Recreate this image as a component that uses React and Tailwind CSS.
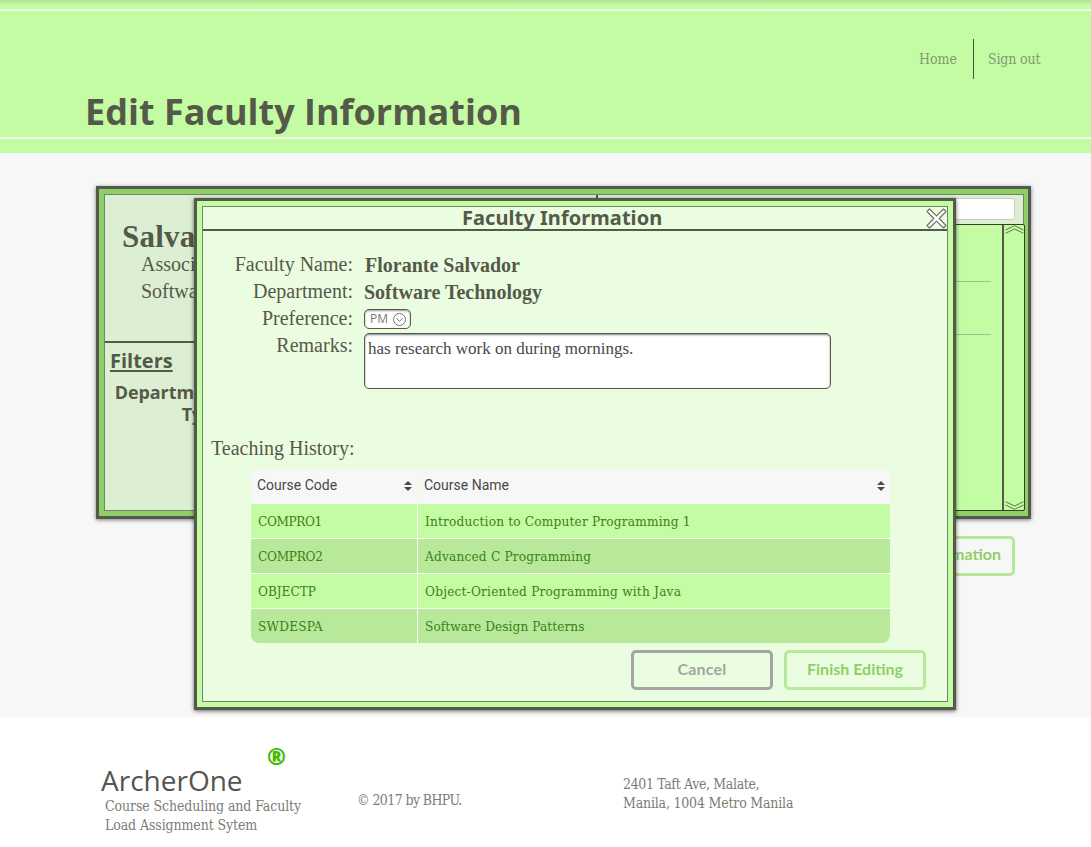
const slab = "font-['DejaVu_Serif_Condensed','DejaVu_Serif',serif] [font-stretch:condensed]";
const times = "font-['Liberation_Serif',serif]";
const sans = "font-['Open_Sans',sans-serif] [font-stretch:normal]";

const courses = [
  { code: "COMPRO1", name: "Introduction to Computer Programming 1", row: "bg-[#c4fca4]", codeFit: "tracking-[-0.4px]", nameFit: "tracking-[0.19px]" },
  { code: "COMPRO2", name: "Advanced C Programming", row: "bg-[#b8e89a]", codeFit: "tracking-[-0.3px]", nameFit: "tracking-[0.2px]" },
  { code: "OBJECTP", name: "Object-Oriented Programming with Java", row: "bg-[#c4fca4]", codeFit: "tracking-[-0.05px]", nameFit: "tracking-[0.21px]" },
  { code: "SWDESPA", name: "Software Design Patterns", row: "bg-[#b8e89a]", codeFit: "tracking-[0.2px]", nameFit: "tracking-[0.08px]" },
];

function SortIcon() {
  return (
    <svg width="8" height="10" viewBox="0 0 8 10" className="mb-0.5 shrink-0" fill="#484848">
      <path d="M4 0 8 4H0Z M4 10 8 6H0Z" />
    </svg>
  );
}

function CloseIcon() {
  return (
    <svg width="21" height="21" viewBox="0 0 21 21" fill="#fff" stroke="#6a7064" strokeWidth="1.1" strokeLinejoin="round">
      <path d="M3.5 1 10.5 7.8 17.5 1 20 3.5 13.2 10.5 20 17.5 17.5 20 10.5 13.2 3.5 20 1 17.5 7.8 10.5 1 3.5Z" />
    </svg>
  );
}

function Chevrons({ className }) {
  return (
    <svg width="19" height="9" viewBox="0 0 19 9" className={className} fill="none" stroke="#5a7a48" strokeWidth="1">
      <path d="M.5 5 9.5 .7 18.5 5 M.5 8.3 9.5 4 18.5 8.3" />
    </svg>
  );
}

function Header() {
  return (
    <header className="flex h-[153px] flex-col bg-[#c4fca4] bg-[linear-gradient(to_bottom,#b0e392,#c4fca4_5px)]">
      <div className="mt-[9px] flex h-[130px] flex-col border-y-2 border-[#f0fde8]">
        <nav className={`mr-[50px] mt-7 flex h-10 shrink-0 items-center self-end text-[14px] text-[#7f9a70] ${slab}`}>
          <a className="w-[54px] tracking-[0px]">Home</a>
          <span className="h-full w-px bg-[#44562f]" />
          <a className="ml-[14px] w-[53px] whitespace-nowrap tracking-[-0.15px]">Sign out</a>
        </nav>
        <h1 className={`ml-[85px] mt-[6px] shrink-0 whitespace-nowrap text-[36px] font-bold leading-[54px] text-[#55594a] ${sans}`}>
          Edit Faculty Information
        </h1>
      </div>
    </header>
  );
}

function FacultyPanel() {
  return (
    <section className="ml-24 mt-[33px] h-[333px] w-[935px] border-[3px] border-[#55594a] bg-[#8fcf68] p-[5px] shadow-[0_1px_4px_rgba(0,0,0,0.5)]">
      <div className="flex h-[317px] w-[920px] border border-[#71856a] bg-[#dcefd2]">
        <aside className="w-[493px] shrink-0 border-r-2 border-[#55594a] text-[#55594a]">
          <div className="h-[148px] border-b-2 border-[#55594a] pt-[24px]">
            <p className={`ml-[17px] text-[31px] font-bold leading-[36px] tracking-[0.2px] ${times}`}>Salvador</p>
            <p className={`ml-9 mt-[-4px] text-[20px] leading-[27px] ${times}`}>Associate</p>
            <p className={`ml-9 text-[20px] leading-[27px] ${times}`}>Software</p>
          </div>
          <h2 className={`ml-[5px] mt-[3px] text-[20px] font-bold leading-[30px] underline decoration-2 underline-offset-2 ${sans}`}>Filters</h2>
          <div className={`mt-[5px] w-[124px] text-right text-[18px] font-bold leading-[22px] tracking-[-0.1px] ${sans}`}>
            <p>Department:</p>
            <p>Type:</p>
          </div>
        </aside>
        <div className="flex grow flex-col">
          <div className="mr-2 mt-[3px] h-[22px] w-[300px] shrink-0 self-end rounded-[3px] border border-[#c8cdc4] bg-white" />
          <div className="mr-[-2px] mt-1 flex h-[287px] shrink-0 rounded-r-[2px] border border-[#33431f] bg-[#c4fca4]">
            <div className="grow pr-[11px]">
              <div className="h-[57px] border-b border-[#9fbf8c]" />
              <div className="h-[53px] border-b border-[#9fbf8c]" />
            </div>
            <div className="flex w-[22px] flex-col items-center justify-between border-l-2 border-[#55594a]">
              <Chevrons />
              <Chevrons className="rotate-180" />
            </div>
          </div>
        </div>
      </div>
    </section>
  );
}

function Field({ label, children }) {
  return (
    <div className="flex h-[27px]">
      <span className={`w-[150px] shrink-0 whitespace-nowrap text-right text-[20px] leading-[27px] text-[#55594a] ${times}`}>{label}</span>
      {children}
    </div>
  );
}

function CourseTable() {
  return (
    <div className="ml-12 mt-[8px] flex w-[639px] flex-col gap-px overflow-hidden rounded-b-lg bg-[#f4fdee]">
      <div className="flex h-[33px] gap-px bg-[#ebfde1] font-['Roboto',sans-serif] text-[14px] leading-[31px] text-[#484848]">
        <div className="flex w-[166px] items-center justify-between bg-[#f7f7f7] pl-1.5 pr-[5px]"><span className="h-[33px]">Course Code</span><SortIcon /></div>
        <div className="flex grow items-center justify-between bg-[#f7f7f7] pl-1.5 pr-[5px]"><span className="h-[33px]">Course Name</span><SortIcon /></div>
      </div>
      {courses.map((c) => (
        <div key={c.code} className={`flex h-[34px] gap-px whitespace-nowrap text-[13.5px] leading-[34px] text-[#3a8215] ${slab}`}>
          <div className={`w-[166px] pl-[7px] ${c.row} ${c.codeFit}`}>{c.code}</div>
          <div className={`grow pl-[7px] ${c.row} ${c.nameFit}`}>{c.name}</div>
        </div>
      ))}
    </div>
  );
}

function FacultyDialog() {
  return (
    <div role="dialog" className="absolute left-[194px] top-[198px] h-[512px] w-[762px] border-[3px] border-[#55594a] bg-[#c4fca4] p-[5px] shadow-[0_1px_4px_rgba(0,0,0,0.6)]">
      <div className="flex h-full flex-col border border-[#71856a] bg-[#ebfde1]">
        <div className="flex h-[24px] shrink-0 items-center border-b-2 border-[#55594a]">
          <h2 className="grow whitespace-nowrap pl-[259px] font-['Noto_Sans',sans-serif] text-[20px] font-bold leading-[22px] tracking-[0.06px] text-[#55594a]">Faculty Information</h2>
          <button aria-label="Close"><CloseIcon /></button>
        </div>
        <div className="mt-[20px] flex h-[157px] shrink-0 flex-col">
          <Field label="Faculty Name:">
            <b className={`ml-3 whitespace-nowrap text-[20px] leading-[29px] text-[#55594a] ${times}`}>Florante Salvador</b>
          </Field>
          <Field label="Department:">
            <b className={`ml-[11px] whitespace-nowrap text-[20px] leading-[29px] text-[#55594a] ${times}`}>Software Technology</b>
          </Field>
          <Field label="Preference:">
            <button className={`ml-[11px] mt-1 flex h-5 w-[47px] items-center justify-between rounded-[5px] border border-[#55594a] bg-white pl-[5px] pr-1 text-[12px] text-[#777] shadow-[inset_0_1px_2px_rgba(0,0,0,0.4)] ${sans}`}>
              PM
              <svg width="13" height="13" viewBox="0 0 13 13" fill="none" stroke="#666" strokeWidth="0.9"><circle cx="6.5" cy="6.5" r="6" /><path d="M3.3 5.2 6.5 8.2 9.7 5.2" /></svg>
            </button>
          </Field>
          <Field label="Remarks:">
            <div className={`ml-[11px] mt-[1px] h-14 w-[467px] shrink-0 rounded-[5px] border border-[#55594a] bg-white pl-[3px] pt-[5px] text-[17px] leading-5 text-[#484848] shadow-[inset_0_1px_2px_rgba(0,0,0,0.5)] ${times}`}>
              has research work on during mornings.
            </div>
          </Field>
        </div>
        <p className={`ml-2 mt-[27px] text-[20px] leading-[27px] text-[#55594a] ${times}`}>Teaching History:</p>
        <CourseTable />
        <div className="mr-[21px] mt-[7px] flex gap-[11px] self-end font-['Lato',sans-serif] text-[16px] font-bold">
          <button className="h-10 w-[142px] rounded-[5px] border-[3px] border-[#a5a5a5] pb-0.5 tracking-[0.2px] text-[#a3a5a0]">Cancel</button>
          <button className="h-10 w-[142px] rounded-[5px] border-[3px] border-[#b8e89a] pb-0.5 text-[#8fcf68]">Finish Editing</button>
        </div>
      </div>
    </div>
  );
}

function Footer() {
  return (
    <footer className={`flex h-[130px] text-[14px] leading-[19px] text-[#7c7c75] ${slab}`}>
      <div className="ml-[101px] w-[256px] pt-[27px]">
        <div className={`ml-[166px] h-[18px] text-[23px] font-extrabold leading-[25px] text-[#3fbd00] ${sans}`}>®</div>
        <div className={`h-[35px] text-[28px] leading-[37px] text-[#55554f] ${sans}`}>ArcherOne</div>
        <p className="ml-1 whitespace-nowrap tracking-[-0.11px]">Course Scheduling and Faculty<br />Load Assignment Sytem</p>
      </div>
      <p className="w-[266px] pt-[74px] tracking-[-0.6px]">© 2017 by BHPU.</p>
      <p className="whitespace-nowrap pt-[58px] tracking-[-0.2px]"><span className="tracking-[-0.36px]">2401 Taft Ave, Malate,</span><br />Manila, 1004 Metro Manila</p>
    </footer>
  );
}

export default function App() {
  return (
    <div className="relative h-[847px] w-[1091px] overflow-hidden bg-white">
      <Header />
      <main className="flex h-[564px] flex-col bg-[#f7f7f7]">
        <FacultyPanel />
        <button className="ml-[835px] mt-[17px] h-10 w-[180px] rounded-[5px] border-[3px] border-[#b8e89a] pb-1 pr-[11px] text-right font-['Lato',sans-serif] text-[16px] font-bold text-[#8fcf68]">
          Edit Information
        </button>
      </main>
      <Footer />
      <FacultyDialog />
    </div>
  );
}
